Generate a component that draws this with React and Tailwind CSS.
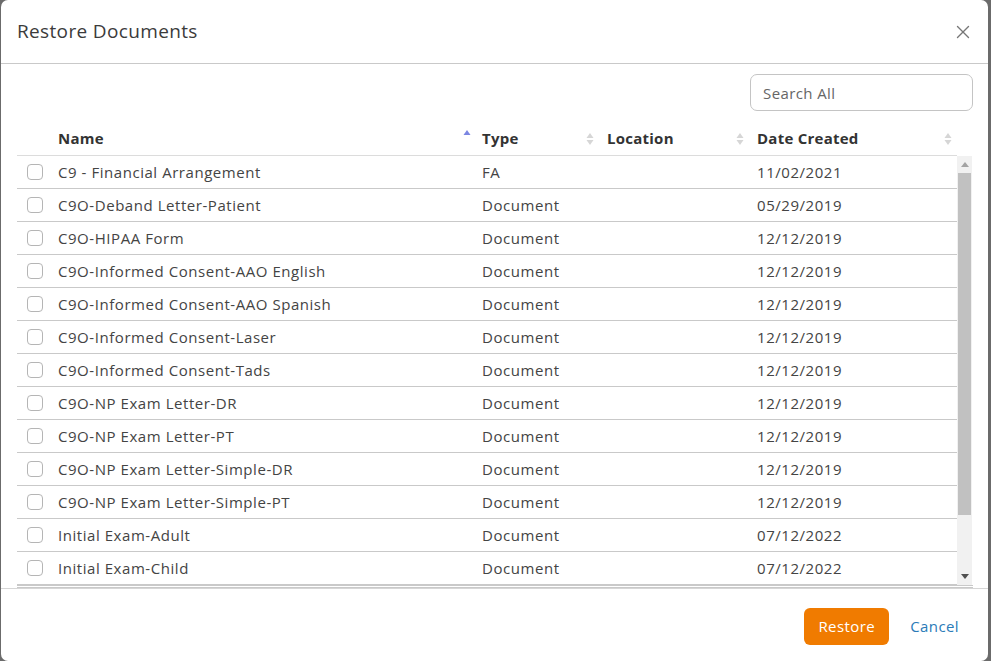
import { X } from "lucide-react";

const docs = [
  { name: "C9 - Financial Arrangement", type: "FA", location: "", created: "11/02/2021" },
  { name: "C9O-Deband Letter-Patient", type: "Document", location: "", created: "05/29/2019" },
  { name: "C9O-HIPAA Form", type: "Document", location: "", created: "12/12/2019" },
  { name: "C9O-Informed Consent-AAO English", type: "Document", location: "", created: "12/12/2019" },
  { name: "C9O-Informed Consent-AAO Spanish", type: "Document", location: "", created: "12/12/2019" },
  { name: "C9O-Informed Consent-Laser", type: "Document", location: "", created: "12/12/2019" },
  { name: "C9O-Informed Consent-Tads", type: "Document", location: "", created: "12/12/2019" },
  { name: "C9O-NP Exam Letter-DR", type: "Document", location: "", created: "12/12/2019" },
  { name: "C9O-NP Exam Letter-PT", type: "Document", location: "", created: "12/12/2019" },
  { name: "C9O-NP Exam Letter-Simple-DR", type: "Document", location: "", created: "12/12/2019" },
  { name: "C9O-NP Exam Letter-Simple-PT", type: "Document", location: "", created: "12/12/2019" },
  { name: "Initial Exam-Adult", type: "Document", location: "", created: "07/12/2022" },
  { name: "Initial Exam-Child", type: "Document", location: "", created: "07/12/2022" },
];

const cols = "grid grid-cols-[33px_424px_125px_150px_208px]";

// stacked up/down carets; when sorted ascending only the up caret shows, in blue
const SortIcon = ({ active }) => (
  <svg width="8" height="14" viewBox="0 0 8 14" className="shrink-0">
    <path d="M4 1 L7.5 6 L0.5 6 Z" fill={active ? "#7b86e2" : "#d6d6d6"} />
    {!active && <path d="M4 13 L7.5 8 L0.5 8 Z" fill="#d6d6d6" />}
  </svg>
);

const HeadCell = ({ label, active }) => (
  <div className={`flex items-center justify-between pl-2 ${active ? "pr-[3px]" : "pr-[5px]"}`}>
    <span className="font-bold tracking-[0.25px]">{label}</span>
    <div className={active ? "-mt-[6px]" : ""}>
      <SortIcon active={active} />
    </div>
  </div>
);

// classic scrollbar with arrow buttons
const ScrollBar = () => (
  <div className="w-[15px] h-full bg-[#f1f1f1] flex flex-col items-center">
    <div className="h-[17px] flex items-center justify-center">
      <svg width="8" height="5" viewBox="0 0 8 5"><path d="M4 0 L8 5 L0 5 Z" fill="#a3a3a3" /></svg>
    </div>
    <div className="w-[13px] h-[342px] bg-[#c1c1c1]" />
    <div className="flex-1" />
    <div className="h-[17px] flex items-center justify-center">
      <svg width="8" height="5" viewBox="0 0 8 5"><path d="M0 0 L8 0 L4 5 Z" fill="#505050" /></svg>
    </div>
  </div>
);

export default function App() {
  return (
    <div
      className="w-[991px] h-[661px] bg-[#6b6b6b] pl-px pr-[3px] text-[15px] text-[#444]"
      style={{ fontFamily: "'Open Sans', 'Liberation Sans', sans-serif" }}
    >
      <div className="h-full flex flex-col bg-white rounded-[7px] overflow-hidden">
        {/* header */}
        <div className="h-[64px] shrink-0 flex items-center justify-between pl-4 pr-[14px] border-b border-[#c9c9c9]">
          <h2 className="text-[19px] text-[#3b3b3b] tracking-[0.35px]">Restore Documents</h2>
          <X size={22} strokeWidth={1.5} className="text-[#777]" />
        </div>

        {/* body */}
        <div className="flex-1 min-h-0 flex flex-col pl-4 pr-[15px] pt-[10px]">
          <div className="flex justify-end">
            <input
              placeholder="Search All"
              className="w-[223px] h-[37px] px-3 rounded-[7px] border border-[#c4c4c4] text-[15px] tracking-[0.4px] placeholder:text-[#666] outline-none"
            />
          </div>

          <div className={`${cols} h-[34px] mt-[11px] items-center text-[#333] border-b border-[#dcdcdc] w-[940px]`}>
            <div />
            <HeadCell label="Name" active />
            <HeadCell label="Type" />
            <HeadCell label="Location" />
            <HeadCell label="Date Created" />
          </div>

          <div className="h-[432px] shrink-0 flex border-b-[3px] border-double border-[#c9c9c9]">
            <div className="w-[940px] overflow-hidden tracking-[0.55px]">
              {docs.map((d) => (
                <div key={d.name} className={`${cols} h-[33px] items-center border-b border-[#c9c9c9]`}>
                  <div className="pl-[10px]">
                    <div className="w-4 h-4 rounded-[4px] border border-[#b5b5b5] bg-white" />
                  </div>
                  <div className="pl-2 truncate">{d.name}</div>
                  <div className="pl-2">{d.type}</div>
                  <div className="pl-2">{d.location}</div>
                  <div className="pl-2">{d.created}</div>
                </div>
              ))}
            </div>
            <ScrollBar />
          </div>
        </div>

        {/* footer */}
        <div className="h-[73px] shrink-0 border-t border-[#d6d6d6] flex items-start justify-end gap-[21px] pt-[19px] pr-[29px]">
          <button className="w-[85px] h-[37px] rounded-[6px] bg-[#f07b00] text-white text-[15px] tracking-[0.4px]">Restore</button>
          <button className="h-[37px] text-[#2a7bb8] text-[15px] tracking-[0.4px]">Cancel</button>
        </div>
      </div>
    </div>
  );
}
